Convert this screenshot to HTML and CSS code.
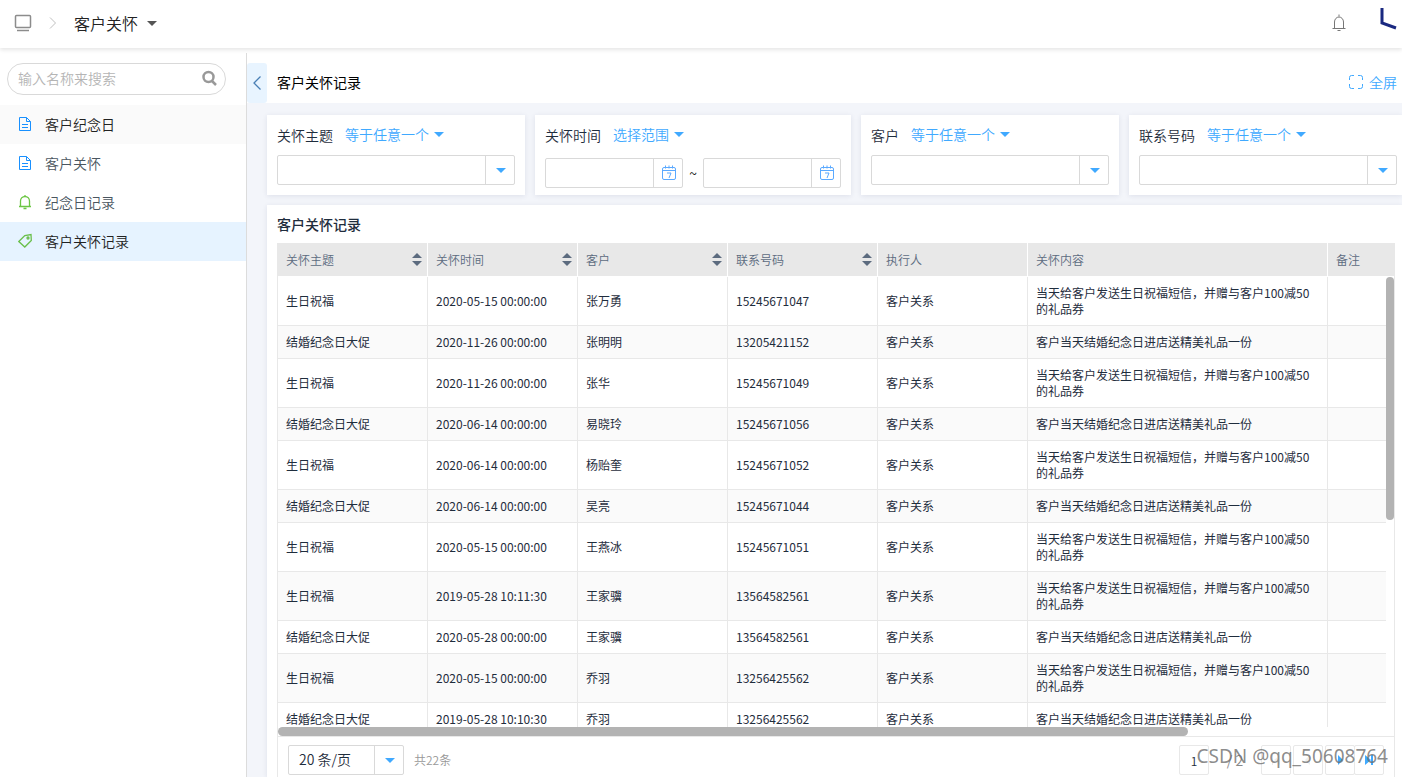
FILE: index.html
```html
<!DOCTYPE html>
<html lang="zh-CN">
<head>
    <meta charset="UTF-8">
    <meta name="viewport" content="width=device-width, initial-scale=1.0">
    <title>客户关怀</title>
    <link rel="stylesheet" href="styles.css">
</head>
<body>
    <header class="topbar">
        <svg class="monitor" width="18" height="18" viewBox="0 0 18 18"><rect x="1.5" y="1.5" width="15" height="12" rx="1"/><path d="M3 16.5h12"/></svg>
        <svg class="crumb" width="8" height="12" viewBox="0 0 8 12"><path d="M1 .5L6.500 6 1 11.500"/></svg>
        <button class="app-name">客户关怀 <span class="caret dark"></span></button>
        <button class="notice" aria-label="通知">
            <svg width="14" height="18" viewBox="0 0 14 18"><path d="M7 .5v2M.5 14.5h13M2.5 14V8a4.5 5 0 0 1 9 0v6M5.5 16.5h3"/></svg>
        </button>
        <svg class="avatar" width="22" height="22" viewBox="0 0 22 22"><path d="M7 0v15l14 5"/></svg>
    </header>

    <div class="layout">
        <aside class="sidebar">
            <div class="search">
                <input type="text" placeholder="输入名称来搜索" aria-label="搜索">
                <svg width="16" height="16" viewBox="0 0 16 16"><circle cx="7.5" cy="7" r="5"/><path d="M11 11l4 4"/></svg>
            </div>
            <nav class="menu">
                <a href="#" class="item first"><svg class="doc" width="14" height="16" viewBox="0 0 14 16"><path d="M1.5 1.5h7l4 4v9h-11zM8.5 1.5v4h4M4 8.5h6M4 11.5h6"/></svg>客户纪念日</a>
                <a href="#" class="item"><svg class="doc" width="14" height="16" viewBox="0 0 14 16"><path d="M1.5 1.5h7l4 4v9h-11zM8.5 1.5v4h4M4 8.5h6M4 11.5h6"/></svg>客户关怀</a>
                <a href="#" class="item"><svg class="bell" width="14" height="16" viewBox="0 0 14 16"><path d="M7 1v1.5M1 12.5h12M2.5 12.5V7a4.5 4.5 0 0 1 9 0v5.5M5.5 14.5h3"/></svg>纪念日记录</a>
                <a href="#" class="item active"><svg class="tag" width="14" height="16" viewBox="0 0 14 16"><path d="M.8 8.500l6-6L13 1.500l.3 6L6.800 14z"/><circle cx="10" cy="5" r="1"/></svg>客户关怀记录</a>
            </nav>
        </aside>

        <main class="main">
            <div class="page-head">
                <button class="collapse" aria-label="收起"><svg width="10" height="14" viewBox="0 0 10 14"><path d="M8.5 .5L2 7l6.5 6.5"/></svg></button>
                <h1>客户关怀记录</h1>
                <button class="fullscreen"><svg width="14" height="14" viewBox="0 0 14 14"><path d="M.5 5V2.5a2 2 0 0 1 2-2H5M9 .5h2.5a2 2 0 0 1 2 2V5M13.5 9v2.5a2 2 0 0 1-2 2H9M5 13.5H2.500a2 2 0 0 1-2-2V9"/></svg>全屏</button>
            </div>

            <div class="content">
                <div class="filters">
                    <section class="card">
                        <div class="filter-head"><label for="theme">关怀主题</label><button class="rule">等于任意一个<span class="caret"></span></button></div>
                        <div class="field"><input type="text" id="theme"><button aria-label="展开"><span class="caret"></span></button></div>
                    </section>
                    <section class="card">
                        <div class="filter-head"><label for="from">关怀时间</label><button class="rule">选择范围<span class="caret"></span></button></div>
                        <div class="range">
                            <div class="field"><input type="text" id="from"><button aria-label="选择日期"><svg width="16" height="16" viewBox="0 0 16 16"><rect x="1.5" y="2.5" width="13" height="12" rx="1.5"/><path d="M1.5 5.5h13M4.5 .5v3M8 .5v3M11.5 .5v3M6 8h4l-2 5"/></svg></button></div>
                            <span class="tilde">~</span>
                            <div class="field"><input type="text" aria-label="结束时间"><button aria-label="选择日期"><svg width="16" height="16" viewBox="0 0 16 16"><rect x="1.5" y="2.5" width="13" height="12" rx="1.5"/><path d="M1.5 5.5h13M4.5 .5v3M8 .5v3M11.5 .5v3M6 8h4l-2 5"/></svg></button></div>
                        </div>
                    </section>
                    <section class="card">
                        <div class="filter-head"><label for="customer">客户</label><button class="rule">等于任意一个<span class="caret"></span></button></div>
                        <div class="field"><input type="text" id="customer"><button aria-label="展开"><span class="caret"></span></button></div>
                    </section>
                    <section class="card last">
                        <div class="filter-head"><label for="phone">联系号码</label><button class="rule">等于任意一个<span class="caret"></span></button></div>
                        <div class="field"><input type="text" id="phone"><button aria-label="展开"><span class="caret"></span></button></div>
                    </section>
                </div>

                <section class="panel">
                    <h2>客户关怀记录</h2>
                    <div class="grid">
                        <div class="table-wrap">
                            <table>
                                <colgroup><col class="c1"><col class="c1"><col class="c1"><col class="c1"><col class="c1"><col class="c2"><col></colgroup>
                                <thead>
                                    <tr><th class="sort">关怀主题</th><th class="sort">关怀时间</th><th class="sort">客户</th><th class="sort">联系号码</th><th>执行人</th><th>关怀内容</th><th>备注</th></tr>
                                </thead>
                                <tbody>
                                    <tr><td>生日祝福</td><td>2020-05-15 00:00:00</td><td>张万勇</td><td>15245671047</td><td>客户关系</td><td>当天给客户发送生日祝福短信，并赠与客户100减50的礼品券</td><td></td></tr>
                                    <tr><td>结婚纪念日大促</td><td>2020-11-26 00:00:00</td><td>张明明</td><td>13205421152</td><td>客户关系</td><td>客户当天结婚纪念日进店送精美礼品一份</td><td></td></tr>
                                    <tr><td>生日祝福</td><td>2020-11-26 00:00:00</td><td>张华</td><td>15245671049</td><td>客户关系</td><td>当天给客户发送生日祝福短信，并赠与客户100减50的礼品券</td><td></td></tr>
                                    <tr><td>结婚纪念日大促</td><td>2020-06-14 00:00:00</td><td>易晓玲</td><td>15245671056</td><td>客户关系</td><td>客户当天结婚纪念日进店送精美礼品一份</td><td></td></tr>
                                    <tr><td>生日祝福</td><td>2020-06-14 00:00:00</td><td>杨贻奎</td><td>15245671052</td><td>客户关系</td><td>当天给客户发送生日祝福短信，并赠与客户100减50的礼品券</td><td></td></tr>
                                    <tr><td>结婚纪念日大促</td><td>2020-06-14 00:00:00</td><td>吴亮</td><td>15245671044</td><td>客户关系</td><td>客户当天结婚纪念日进店送精美礼品一份</td><td></td></tr>
                                    <tr><td>生日祝福</td><td>2020-05-15 00:00:00</td><td>王燕冰</td><td>15245671051</td><td>客户关系</td><td>当天给客户发送生日祝福短信，并赠与客户100减50的礼品券</td><td></td></tr>
                                    <tr><td>生日祝福</td><td>2019-05-28 10:11:30</td><td>王家骥</td><td>13564582561</td><td>客户关系</td><td>当天给客户发送生日祝福短信，并赠与客户100减50的礼品券</td><td></td></tr>
                                    <tr><td>结婚纪念日大促</td><td>2020-05-28 00:00:00</td><td>王家骥</td><td>13564582561</td><td>客户关系</td><td>客户当天结婚纪念日进店送精美礼品一份</td><td></td></tr>
                                    <tr><td>生日祝福</td><td>2020-05-15 00:00:00</td><td>乔羽</td><td>13256425562</td><td>客户关系</td><td>当天给客户发送生日祝福短信，并赠与客户100减50的礼品券</td><td></td></tr>
                                    <tr><td>结婚纪念日大促</td><td>2019-05-28 10:10:30</td><td>乔羽</td><td>13256425562</td><td>客户关系</td><td>客户当天结婚纪念日进店送精美礼品一份</td><td></td></tr>
                                </tbody>
                            </table>
                            <div class="track-y"><div class="thumb"></div></div>
                        </div>
                        <div class="track-x"><div class="thumb"></div></div>
                        <div class="pager">
                            <div class="page-size">
                                <select aria-label="每页条数"><option>20 条/页</option><option>50 条/页</option></select>
                                <span class="arrow"><span class="caret"></span></span>
                            </div>
                            <span class="total">共22条</span>
                            <div class="pages">
                                <input type="text" value="1" aria-label="页码">
                                <span class="count">/ 2</span>
                                <button disabled aria-label="首页"><svg width="10" height="10" viewBox="0 0 10 10"><path d="M9 0v10L3 5zM1 0h1v10H1z"/></svg></button>
                                <button disabled aria-label="上一页"><svg width="10" height="10" viewBox="0 0 10 10"><path d="M7 0v10L2 5z"/></svg></button>
                                <span class="pair">
                                    <button aria-label="下一页"><svg width="10" height="10" viewBox="0 0 10 10"><path d="M3 0v10l5-5z"/></svg></button>
                                    <button aria-label="末页"><svg width="10" height="10" viewBox="0 0 10 10"><path d="M1 0v10l6-5zM7 0h2v10H7z"/></svg></button>
                                </span>
                            </div>
                        </div>
                    </div>
                </section>
            </div>
        </main>
    </div>
    <div class="watermark">CSDN @qq_50608764</div>
</body>
</html>
```

FILE: styles.css
```css
* {
    box-sizing: border-box;
}
body {
    display: flex;
    flex-direction: column;
    height: 100vh;
    margin: 0;
    overflow: hidden;
    background: #fff;
    color: #1f2d3d;
    font-family: "Noto Sans CJK SC", sans-serif;
    font-size: 14px;
    font-weight: 350;
    line-height: 20px;
}
button, input, select {
    font: inherit;
    color: inherit;
    margin: 0;
    padding: 0;
    border: none;
    background: none;
    outline: none;
}
button {
    cursor: pointer;
}
svg {
    display: block;
    flex: none;
    fill: none;
    stroke: currentColor;
}
.caret {
    display: inline-block;
    flex: none;
    border: 5px solid transparent;
    border-top-color: #40a9ff;
    border-bottom: none;
}
.caret.dark {
    border-top-color: #555;
}

/* top bar */
.topbar {
    display: flex;
    align-items: center;
    flex: none;
    height: 48px;
    padding: 0 0 2px 14px;
    box-shadow: 0 2px 4px rgba(0, 0, 0, 0.1);
    position: relative;
    z-index: 1;
}
.monitor {
    color: #8c8c8c;
    stroke-width: 1.5;
}
.crumb {
    margin: 0 17px;
    color: #bfbfbf;
}
.app-name {
    display: flex;
    align-items: center;
    gap: 9px;
    font-size: 16px;
    color: #222;
}
.notice {
    margin-left: auto;
    color: #777;
}
.avatar {
    align-self: flex-start;
    margin: 8px 5px 0 29px;
    color: #1a2980;
    stroke-width: 3;
}

/* sidebar */
.layout {
    display: flex;
    flex: 1;
    min-height: 0;
    padding-top: 5px;
}
.sidebar {
    flex: none;
    width: 247px;
    padding-top: 10px;
    border-right: 1px solid #dcdcdc;
}
.search {
    display: flex;
    align-items: center;
    height: 32px;
    margin: 0 20px 10px 7px;
    padding: 0 8px 2px 10px;
    border: 1px solid #d9d9d9;
    border-radius: 16px;
}
.search input {
    flex: 1;
    min-width: 0;
}
.search input::placeholder {
    color: #b5b5b5;
    opacity: 1;
}
.search svg {
    color: #999;
    stroke-width: 2.5;
}
.item {
    display: flex;
    align-items: center;
    gap: 13px;
    height: 39px;
    padding: 0 0 2px 18px;
    color: #4a5660;
    text-decoration: none;
}
.item.first {
    background: #fafafa;
    color: #222;
}
.item.active {
    background: #e6f3ff;
    color: #222;
}
.doc {
    color: #1890ff;
}
.bell {
    color: #6cc644;
    stroke-width: 1.3;
}
.tag {
    color: #6abf4b;
    stroke-width: 1.3;
}

/* main area */
.main {
    display: flex;
    flex-direction: column;
    flex: 1;
    min-width: 0;
    background: #f3f5fa;
}
.page-head {
    display: flex;
    flex: none;
    height: 50px;
    padding: 10px 5px 0 0;
    background: #fff;
}
.page-head h1 {
    margin: 0 auto 0 10px;
    font-size: 14px;
    font-weight: 400;
    line-height: 38px;
    color: #000;
}
.collapse {
    display: flex;
    align-items: center;
    justify-content: center;
    width: 20px;
    height: 40px;
    border-radius: 3px;
    background: #e8f4ff;
    color: #4a7fb5;
    stroke-width: 1.3;
}
.fullscreen {
    display: flex;
    align-items: center;
    gap: 6px;
    height: 38px;
    color: #40a9ff;
}
.content {
    display: flex;
    flex-direction: column;
    flex: 1;
    gap: 10px;
    min-height: 0;
    padding: 12px 0 0 20px;
}
.filters {
    display: grid;
    grid-template-columns: 258fr 316fr 258fr 273fr;
    gap: 10px;
}
.card {
    height: 80px;
    min-width: 0;
    padding: 10px;
    background: #fff;
    box-shadow: 0 1px 5px rgba(40, 50, 100, 0.1);
}
.card.last {
    padding-right: 5px;
}
.filter-head {
    display: flex;
    gap: 12px;
    height: 20px;
    margin-bottom: 10px;
}
.rule {
    display: flex;
    align-items: center;
    gap: 5px;
    padding-bottom: 2px;
    color: #40a9ff;
}
.field {
    display: flex;
    flex: 1;
    min-width: 0;
    height: 30px;
    border: 1px solid #d9d9d9;
    border-radius: 2px;
}
.field input {
    flex: 1;
    min-width: 0;
    padding: 0 8px;
}
.field button {
    display: flex;
    align-items: center;
    justify-content: center;
    width: 29px;
    padding-left: 2px;
    border-left: 1px solid #d9d9d9;
    color: #5aa9ff;
}
.range {
    display: flex;
    padding-top: 3px;
}
.tilde {
    width: 20px;
    line-height: 30px;
    text-align: center;
    color: #000;
}

/* table */
.panel {
    display: flex;
    flex-direction: column;
    flex: 1;
    min-height: 0;
    padding: 9px 7px 0 10px;
    background: #fff;
    box-shadow: 0 1px 5px rgba(40, 50, 100, 0.1);
}
.panel h2 {
    margin: 0 0 9px;
    font-size: 14px;
    font-weight: 500;
    line-height: 20px;
}
.grid {
    display: flex;
    flex-direction: column;
    flex: 1;
    min-height: 0;
    border: 1px solid #e8e8e8;
    border-top: none;
    border-bottom: none;
}
.table-wrap {
    position: relative;
    flex: 1;
    min-height: 0;
    overflow: hidden;
}
table {
    width: 1350px;
    table-layout: fixed;
    border-collapse: separate;
    border-spacing: 0;
    font-size: 12px;
    font-weight: 400;
    line-height: 16px;
}
.c1 {
    width: 150px;
}
.c2 {
    width: 300px;
}
th, td {
    padding: 8px;
    text-align: left;
    border-right: 1px solid #e8e8e8;
    border-bottom: 1px solid #e8e8e8;
}
th {
    height: 34px;
    background: #e8e8e8;
    border-color: #fff;
    color: #5c6b7f;
    font-weight: 350;
}
.sort {
    position: relative;
}
.sort::before, .sort::after {
    content: "";
    position: absolute;
    right: 5px;
    border: 5px solid transparent;
}
.sort::before {
    top: 10px;
    border-top: none;
    border-bottom-color: #5c6b7f;
}
.sort::after {
    top: 18px;
    border-bottom: none;
    border-top-color: #5c6b7f;
}
tbody tr:nth-child(even) {
    background: #fafafa;
}
.track-y {
    position: absolute;
    top: 34px;
    right: 0;
    bottom: 0;
    width: 8px;
    background: #fff;
}
.thumb {
    border-radius: 5px;
    background: #b3b3b3;
}
.track-y .thumb {
    height: 54%;
}
.track-x {
    flex: none;
    height: 9px;
}
.track-x .thumb {
    width: 81.5%;
    height: 9px;
}
.pager {
    display: flex;
    align-items: flex-start;
    flex: none;
    height: 41px;
    padding: 8px 10px 0;
    border-top: 1px solid #e8e8e8;
}
.page-size {
    display: flex;
    position: relative;
    width: 116px;
    height: 30px;
    border: 1px solid #d9d9d9;
    border-radius: 2px;
}
.page-size select {
    width: 100%;
    padding: 0 0 2px 10px;
    appearance: none;
}
.arrow {
    display: flex;
    align-items: center;
    justify-content: center;
    position: absolute;
    top: 0;
    right: 0;
    width: 29px;
    height: 28px;
    padding-left: 2px;
    border-left: 1px solid #d9d9d9;
    pointer-events: none;
}
.total {
    margin-left: 10px;
    font-size: 12px;
    line-height: 30px;
    color: #999;
}
.pages {
    display: flex;
    gap: 2px;
    margin-left: auto;
}
.pages input, .pages button {
    width: 30px;
    height: 30px;
    border: 1px solid #e8e8e8;
    border-radius: 2px;
    font-size: 12px;
    text-align: center;
}
.pages button {
    display: flex;
    align-items: center;
    justify-content: center;
    color: #40a9ff;
}
.pages button:disabled {
    color: #eee;
}
.pages svg {
    fill: currentColor;
    stroke: none;
}
.count {
    width: 48px;
    line-height: 30px;
    text-align: center;
    color: #888;
}
.pair {
    display: flex;
}
.pair button + button {
    margin-left: -1px;
}
.watermark {
    position: absolute;
    right: 14px;
    bottom: 9px;
    font-family: "Noto Sans", sans-serif;
    font-size: 19px;
    font-weight: 400;
    line-height: 24px;
    color: rgba(110, 110, 110, 0.8);
    pointer-events: none;
}
```
